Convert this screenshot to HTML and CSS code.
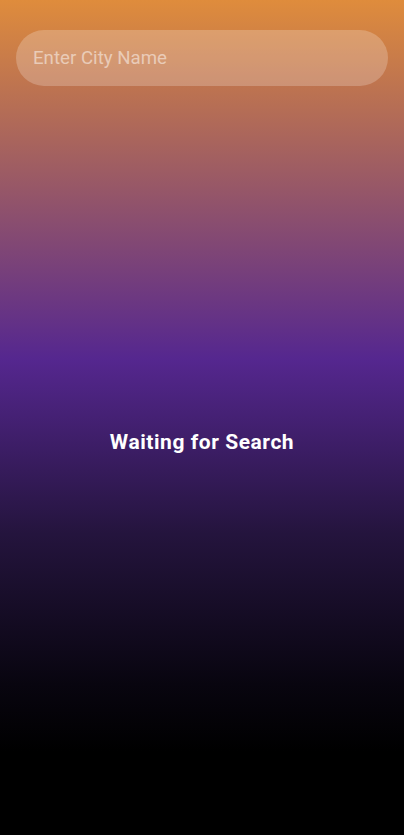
FILE: index.html
```html
<!DOCTYPE html>
<html lang="en">
<head>
<meta charset="utf-8">
<meta name="viewport" content="width=device-width, initial-scale=1">
<title>Weather</title>
<link rel="stylesheet" href="styles.css">
</head>
<body>
<main class="screen">
  <div class="search">
    <input class="search-input" type="text" placeholder="Enter City Name">
  </div>
  <div class="status">
    <p class="status-text">Waiting for Search</p>
  </div>
</main>
</body>
</html>
```

FILE: styles.css
```css
html, body {
  margin: 0;
  padding: 0;
  height: 100%;
}
body {
  font-family: Roboto, "Noto Sans", "Liberation Sans", sans-serif;
  background: #000;
}
.screen {
  box-sizing: border-box;
  min-height: 835px;
  height: 100vh;
  display: flex;
  flex-direction: column;
  padding: 30px 16px 0;
  background: linear-gradient(to bottom, #df8c3c 0%, #55278f 43%, #24143d 64%, #08050f 82%, #000 90%, #000 100%);
}
.search {
  display: flex;
}
.search-input {
  flex: 1;
  box-sizing: border-box;
  height: 56px;
  border: none;
  outline: none;
  border-radius: 28px;
  padding: 0 17px;
  background: rgba(255, 255, 255, 0.22);
  font-family: Roboto, "Noto Sans", "Liberation Sans", sans-serif;
  font-size: 18.7px;
  color: #fff;
}
.search-input::placeholder {
  color: rgba(255, 255, 255, 0.5);
}
.status {
  display: flex;
  justify-content: center;
  padding-top: 344px;
}
.status-text {
  margin: 0;
  font-size: 21px;
  font-weight: 700;
  letter-spacing: 0.55px;
  color: #fff;
}
```
